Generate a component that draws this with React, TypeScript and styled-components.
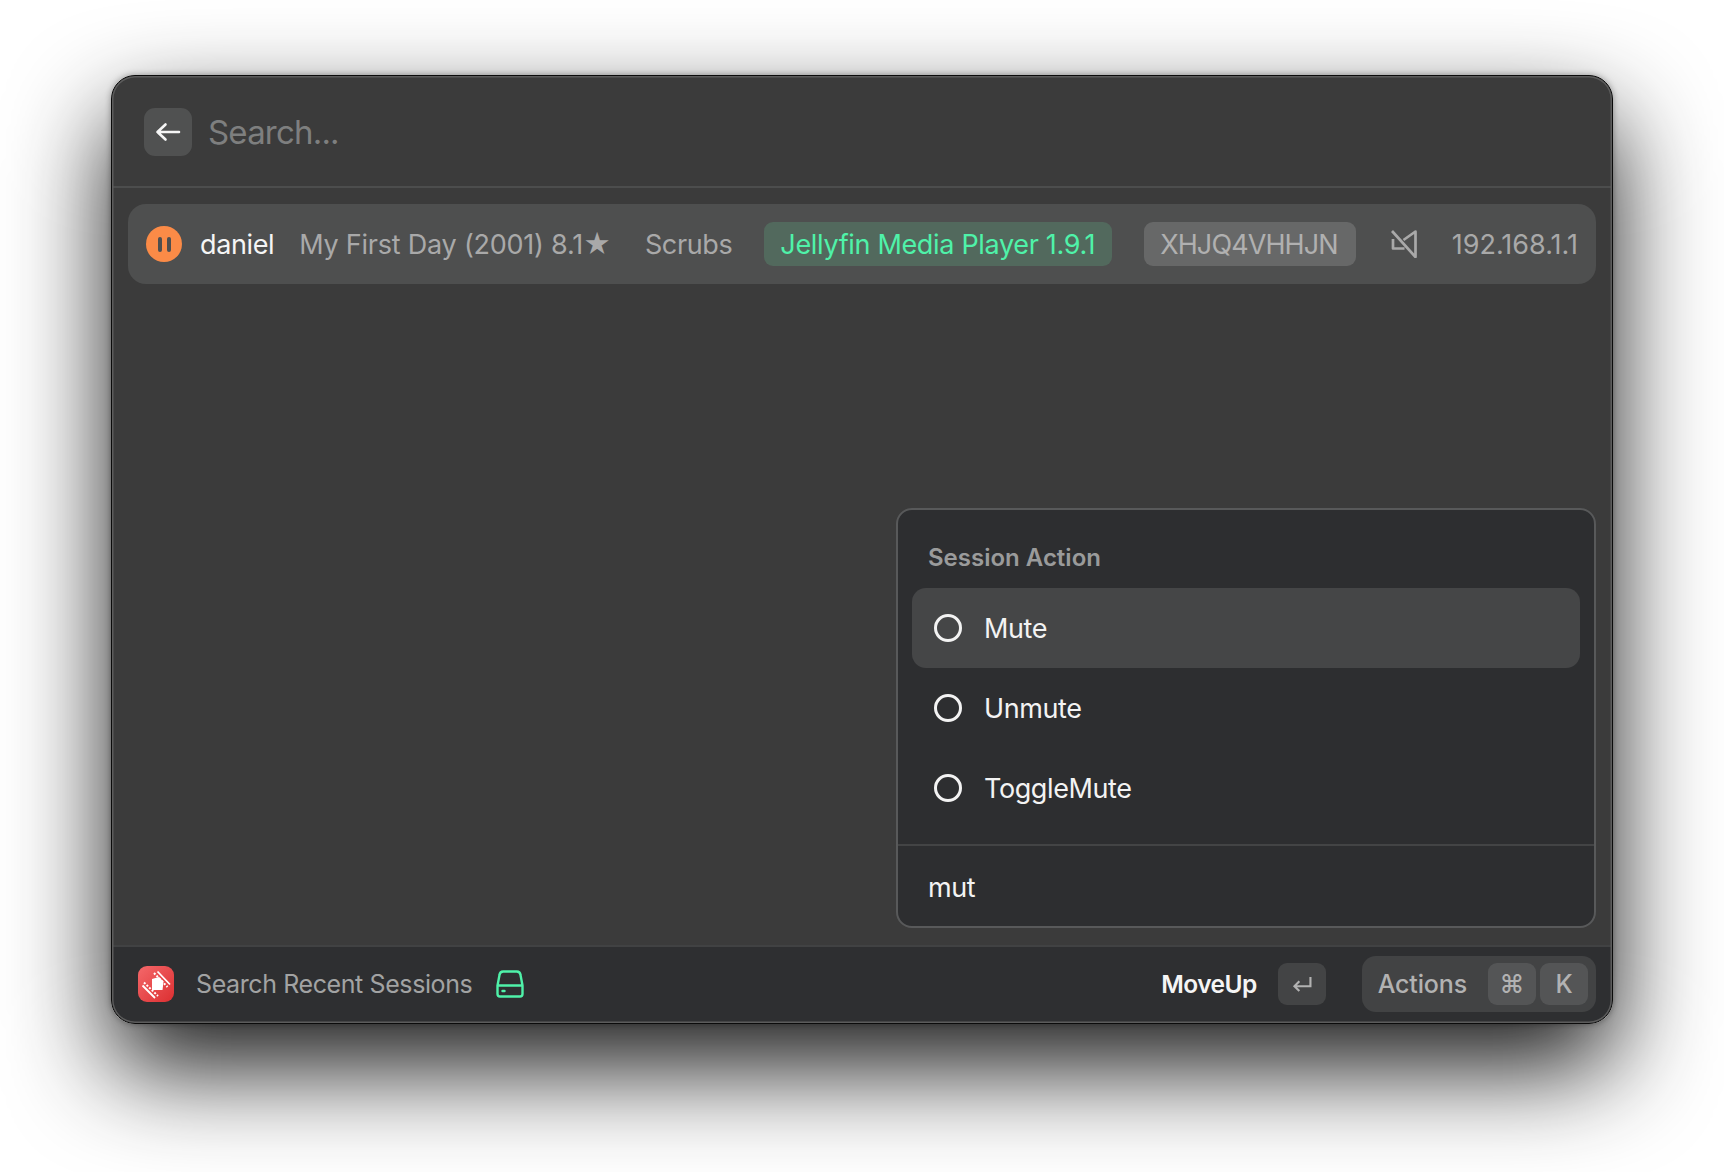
import React from 'react';
import styled, { createGlobalStyle } from 'styled-components';

const GlobalStyle = createGlobalStyle`
    html, body {
        margin: 0;
        background: #ffffff;
    }
    * {
        box-sizing: border-box;
    }
`

const Page = styled.div`
    position: relative;
    width: 1724px;
    height: 1172px;
    overflow: hidden;
    padding: 75px 111px 0;
    background: #ffffff;
    font-family: Inter, "Noto Sans", "DejaVu Sans", sans-serif;
`

const Frame = styled.div`
    position: relative;
    width: 1502px;
    height: 949px;
    display: flex;
    flex-direction: column;
    border: 1px solid #0b0b0b;
    border-radius: 24px;
    overflow: hidden;
    background: #3b3b3b;
    &::after {
        content: '';
        position: absolute;
        inset: 0;
        border-radius: 23px;
        box-shadow: inset 0 0 0 1.5px #5c5c5c;
        pointer-events: none;
    }
`

const Shadow = styled.div`
    position: absolute;
    left: 111px;
    top: 75px;
    width: 1502px;
    height: 949px;
    border-radius: 24px;
    box-shadow: 0 44px 100px rgba(0, 0, 0, 0.9), 0 0 6px rgba(0, 0, 0, 0.35);
`

const SearchBar = styled.div`
    height: 112px;
    flex: none;
    display: flex;
    align-items: flex-start;
    gap: 16px;
    padding: 32px 32px 0;
    border-bottom: 2px solid #4c4d4d;
`

const BackButton = styled.div`
    width: 48px;
    height: 48px;
    flex: none;
    display: flex;
    align-items: center;
    justify-content: center;
    border-radius: 11px;
    background: #505151;
`

const SearchText = styled.div`
    font-size: 33px;
    line-height: 48px;
    letter-spacing: -0.8px;
    color: #7e7f7f;
`

const Content = styled.div`
    flex: 1;
    padding: 16px 16px 0;
`

const SessionRow = styled.div`
    height: 80px;
    display: flex;
    align-items: center;
    padding: 0 18px;
    border-radius: 18px;
    background: #4e4f4f;
    font-size: 27px;
    letter-spacing: -0.37px;
    color: #a9a9a9;
`

const PauseBadge = styled.div`
    width: 36px;
    height: 36px;
    flex: none;
    display: flex;
    align-items: center;
    justify-content: center;
    gap: 5px;
    margin-right: 18px;
    border-radius: 50%;
    background: #fb8b47;
    i {
        width: 4px;
        height: 15px;
        border-radius: 2px;
        background: #4e4f4f;
    }
`

const UserName = styled.span`
    color: #f5f5f5;
    margin-right: 25px;
`

const Movie = styled.span`
    margin-right: 34px;
    letter-spacing: -0.23px;
    white-space: nowrap;
`

const Show = styled.span`
    margin-right: 32px;
`

const Tag = styled.span<{ $green?: boolean }>`
    height: 44px;
    display: flex;
    align-items: center;
    padding: 0 ${p => (p.$green ? '17px' : '18px')} 0 16px;
    border-radius: 9px;
    white-space: nowrap;
    letter-spacing: ${p => (p.$green ? '-0.33px' : '-0.9px')};
    margin-right: ${p => (p.$green ? '32px' : '35px')};
    background: ${p => (p.$green ? '#52695d' : '#676868')};
    color: ${p => (p.$green ? '#4ff2a9' : '#b0b0b0')};
`

const MuteIcon = styled.svg`
    width: 26px;
    height: 28px;
    flex: none;
    margin-right: 35px;
`

const Address = styled.span`
    letter-spacing: 0;
`

const Footer = styled.div`
    height: 78px;
    flex: none;
    display: flex;
    align-items: center;
    padding: 0 16px 2px 26px;
    border-top: 2px solid #414243;
    background: #2e2f31;
    font-size: 25px;
`

const AppIcon = styled.svg`
    width: 36px;
    height: 36px;
    flex: none;
    margin-right: 22px;
`

const FooterTitle = styled.span`
    color: #a2a3a3;
    letter-spacing: -0.4px;
    margin-right: 24px;
`

const DriveIcon = styled.svg`
    width: 28px;
    height: 28px;
    flex: none;
`

const Spacer = styled.div`
    flex: 1;
`

const PrimaryLabel = styled.span`
    font-weight: 600;
    font-size: 24.5px;
    letter-spacing: -0.55px;
    color: #f5f5f5;
    margin-right: 21px;
`

const Key = styled.span<{ $light?: boolean }>`
    width: 48px;
    height: 42px;
    flex: none;
    display: flex;
    align-items: center;
    justify-content: center;
    border-radius: 9px;
    background: ${p => (p.$light ? '#545556' : '#434445')};
    color: #b2b2b2;
    font-weight: 500;
`

const ActionsGroup = styled.div`
    height: 56px;
    display: flex;
    align-items: center;
    gap: 4px;
    margin-left: 36px;
    padding: 0 8px 0 16px;
    border-radius: 14px;
    background: #424344;
`

const ActionsLabel = styled.span`
    color: #b2b2b2;
    font-weight: 500;
    letter-spacing: -0.15px;
    margin-right: 17px;
`

const ActionPanel = styled.div`
    position: absolute;
    right: 16px;
    bottom: 95px;
    width: 700px;
    height: 420px;
    display: flex;
    flex-direction: column;
    border: 2px solid #58595a;
    border-radius: 16px;
    background: #2d2e30;
`

const PanelHeading = styled.div`
    height: 78px;
    flex: none;
    padding: 34px 0 0 30px;
    font-size: 24px;
    line-height: 28px;
    font-weight: 600;
    color: #9a9b9b;
`

const ActionList = styled.div`
    flex: 1;
    padding: 0 14px;
`

const ActionItem = styled.div<{ $active?: boolean }>`
    height: 80px;
    display: flex;
    align-items: center;
    gap: 22px;
    padding: 0 22px;
    border-radius: 14px;
    font-size: 27px;
    letter-spacing: -0.4px;
    color: #f3f3f3;
    background: ${p => (p.$active ? '#454647' : 'transparent')};
`

const Radio = styled.span`
    width: 28px;
    height: 28px;
    flex: none;
    border: 3px solid #f3f3f3;
    border-radius: 50%;
`

const PanelSearch = styled.div`
    height: 82px;
    flex: none;
    display: flex;
    align-items: center;
    padding: 2px 0 0 30px;
    border-top: 2px solid #434445;
    font-size: 27px;
    letter-spacing: -0.4px;
    color: #f3f3f3;
`

const actions = ['Mute', 'Unmute', 'ToggleMute'];

const App = (): JSX.Element => {
    return (
        <Page>
            <GlobalStyle />
            <Shadow />
            <Frame>
                <SearchBar>
                    <BackButton>
                        <svg width="26" height="20" viewBox="0 0 26 20" fill="none" stroke="#f5f5f5" strokeWidth="2.6" strokeLinecap="round" strokeLinejoin="round">
                            <path d="M2.5 10H24M10.5 2.5L2.5 10l8 7.5" />
                        </svg>
                    </BackButton>
                    <SearchText>Search...</SearchText>
                </SearchBar>
                <Content>
                    <SessionRow>
                        <PauseBadge><i /><i /></PauseBadge>
                        <UserName>daniel</UserName>
                        <Movie>My First Day (2001) 8.1★</Movie>
                        <Show>Scrubs</Show>
                        <Tag $green>Jellyfin Media Player 1.9.1</Tag>
                        <Tag>XHJQ4VHHJN</Tag>
                        <MuteIcon viewBox="0 0 26 28" fill="none" stroke="#a9a9a9" strokeWidth="2.7" strokeLinejoin="round">
                            <path d="M1 1l23.5 26V1.5L12.5 10M2 9v9.5h11.5" />
                        </MuteIcon>
                        <Address>192.168.1.1</Address>
                    </SessionRow>
                </Content>
                <Footer>
                    <AppIcon viewBox="0 0 36 36">
                        <defs>
                            <linearGradient id="appRed" x1="0" y1="0" x2="1" y2="1">
                                <stop offset="0" stopColor="#f4686a" />
                                <stop offset="1" stopColor="#dc2f31" />
                            </linearGradient>
                        </defs>
                        <rect width="36" height="36" rx="9" fill="url(#appRed)" />
                        <path d="M19.500 5.500L32 18.500M4.500 19.500L17 32" stroke="#ffffff" strokeWidth="1.8" fill="none" />
                        <path d="M16 7L29.500 21M6 16.500L20 30" stroke="#ffffff" strokeWidth="2" strokeDasharray="2 1.6" fill="none" />
                        <path d="M14 13l7-2 4.500 4.500-1 8.500H14z" fill="#ffffff" />
                    </AppIcon>
                    <FooterTitle>Search Recent Sessions</FooterTitle>
                    <DriveIcon viewBox="0 0 28 28" fill="none" stroke="#4ff2a9" strokeWidth="2.4" strokeLinecap="round" strokeLinejoin="round">
                        <path d="M1.5 15.5V24a2.5 2.5 0 0 0 2.5 2.5h20a2.5 2.5 0 0 0 2.5-2.5v-8.5M1.5 15.5h25M1.5 15.5L3.5 5A3.8 3.8 0 0 1 7.2 1.5h13.6A3.8 3.8 0 0 1 24.5 5l2 10.5M6.5 21h2" />
                    </DriveIcon>
                    <Spacer />
                    <PrimaryLabel>MoveUp</PrimaryLabel>
                    <Key>
                        <svg width="20" height="16" viewBox="0 0 22 18" fill="none" stroke="#b2b2b2" strokeWidth="2.4">
                            <path d="M20.5 1v10.5H3M8 6l-5.5 5.5L8 17" />
                        </svg>
                    </Key>
                    <ActionsGroup>
                        <ActionsLabel>Actions</ActionsLabel>
                        <Key $light>⌘</Key>
                        <Key $light>K</Key>
                    </ActionsGroup>
                </Footer>
                <ActionPanel>
                    <PanelHeading>Session Action</PanelHeading>
                    <ActionList>
                        {actions.map((name, i) => (
                            <ActionItem key={name} $active={i === 0}>
                                <Radio />
                                {name}
                            </ActionItem>
                        ))}
                    </ActionList>
                    <PanelSearch>mut</PanelSearch>
                </ActionPanel>
            </Frame>
        </Page>
    )
}

export default App;
